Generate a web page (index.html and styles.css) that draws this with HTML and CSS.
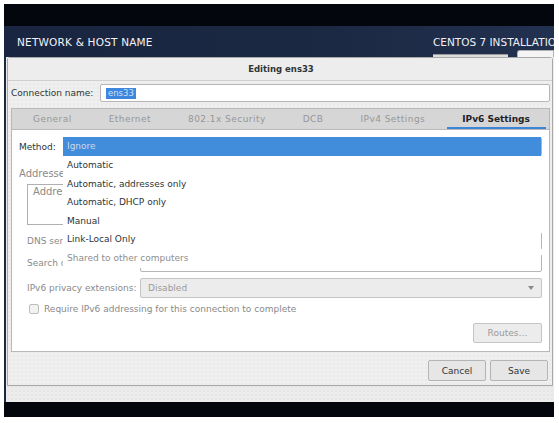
FILE: index.html
```html
<!DOCTYPE html>
<html>
<head>
<meta charset="utf-8">
<link rel="stylesheet" href="styles.css">
</head>
<body>
<div class="screen">
  <div class="topbar"></div>
  <div class="window">
    <header class="hdr">
      <div class="hdr-left">
        <div class="hdr-title">NETWORK &amp; HOST NAME</div>
        <div class="done-btn"></div>
      </div>
      <div class="hdr-right">
        <div class="product">CENTOS 7 INSTALLATION</div>
        <div class="hdr-btns"><span class="kb"></span><span class="help"></span></div>
      </div>
    </header>
    <div class="main">
      <div class="dialog">
        <div class="dlg-title">Editing ens33</div>
        <div class="dlg-body">
          <div class="conn-row">
            <span class="conn-lbl">Connection name:</span>
            <div class="entry conn-entry"><span class="sel">ens33</span></div>
          </div>
          <div class="notebook">
            <div class="tabs">
              <span class="tab">General</span>
              <span class="tab">Ethernet</span>
              <span class="tab">802.1x Security</span>
              <span class="tab">DCB</span>
              <span class="tab">IPv4 Settings</span>
              <span class="tab active">IPv6 Settings</span>
            </div>
            <div class="page">
              <div class="method-row">
                <span class="lbl dark">Method:</span>
                <div class="combo method-combo"></div>
              </div>
              <div class="addr-lbl"><span>Addresses</span></div>
              <div class="addr-table"><div class="th">Address</div></div>
              <div class="field-row dns-row">
                <span class="clip"><span class="lbl">DNS servers:</span></span>
                <div class="entry f-entry"></div>
              </div>
              <div class="field-row search-row">
                <span class="clip"><span class="lbl">Search domains:</span></span>
                <div class="entry f-entry"></div>
              </div>
              <div class="field-row priv-row">
                <span class="lbl f-lbl">IPv6 privacy extensions:</span>
                <div class="combo dis-combo"><span>Disabled</span><span class="arrow"></span></div>
              </div>
              <div class="check-row">
                <span class="checkbox"></span>
                <span class="lbl">Require IPv6 addressing for this connection to complete</span>
              </div>
              <div class="routes-row"><span class="btn routes-btn">Routes…</span></div>

              <div class="menu">
                <div class="item hl">Ignore</div>
                <div class="item">Automatic</div>
                <div class="item">Automatic, addresses only</div>
                <div class="item">Automatic, DHCP only</div>
                <div class="item">Manual</div>
                <div class="item">Link-Local Only</div>
                <div class="item insens">Shared to other computers</div>
              </div>
            </div>
          </div>
          <div class="dlg-btns">
            <span class="btn">Cancel</span>
            <span class="btn">Save</span>
          </div>
        </div>
      </div>
    </div>
  </div>
  <div class="botbar"></div>
</div>
</body>
</html>
```

FILE: styles.css
```css
* { box-sizing: border-box; }
html, body { margin: 0; padding: 0; background: #ffffff; }
body { font-family: "DejaVu Sans", sans-serif; font-size: 9px; color: #2e3436; }

.screen {
  margin: 4px 5px 0 4px;
  width: 550px;
  display: flex;
  flex-direction: column;
}
.topbar { height: 22px; background: #03060d; }
.botbar { height: 15px; background: #03060d; }

.window { background: #1b2842; display: flex; flex-direction: column; }

.hdr {
  height: 31px;
  display: flex;
  justify-content: space-between;
  background: linear-gradient(90deg, #1a2641 0%, #1b2842 55%, #223150 100%);
  overflow: hidden;
}
.hdr-left { padding-left: 13px; display: flex; flex-direction: column; }
.hdr-title {
  color: #f2f4f8;
  font-size: 10.5px;
  line-height: 12px;
  margin-top: 10px;
  letter-spacing: 0.2px;
}
.done-btn {
  margin-top: 12px;
  margin-left: 1px;
  width: 44px;
  height: 7px;
  background: #3b86d9;
  border-radius: 2px 2px 0 0;
}
.hdr-right { width: 121px; display: flex; flex-direction: column; overflow: hidden; }
.product {
  color: #eef0f4;
  font-size: 10.5px;
  line-height: 12px;
  margin-top: 10px;
  white-space: nowrap;
}
.hdr-btns { display: flex; align-items: flex-end; gap: 9px; flex: 1; }
.kb { width: 75px; height: 3px; background: #dcdcdc; border-top: 1px solid #9a9a9a; }
.help { flex: 1; height: 7px; background: #f4f4f4; border: 1px solid #b0b0b0; border-bottom: none; border-radius: 3px 0 0 0; }

.main {
  height: 345px;
  margin-left: 2px;
  background: #ececec;
  background-image: radial-gradient(#d6d6d6 0.5px, transparent 0.8px);
  background-size: 4px 4px;
  padding-left: 1px;
}

.dialog {
  width: 546px;
  height: 329px;
  border: 1px solid #a8a8a8;
  border-radius: 3px 3px 0 0;
  background: #efefef;
  background-image: radial-gradient(#dadada 0.5px, transparent 0.8px);
  background-size: 4px 4px;
  display: flex;
  flex-direction: column;
}
.dlg-title {
  height: 23px;
  line-height: 23px;
  text-align: center;
  font-weight: bold;
  font-size: 8.5px;
  color: #2e3436;
  border-bottom: 1px solid #cfcfcf;
  background: #ededed;
  padding-left: 2px;
}
.dlg-body { padding: 3px 2px 0 3px; flex: 1; display: flex; flex-direction: column; }

.conn-row { display: flex; align-items: center; height: 18px; }
.conn-lbl { width: 89px; color: #2e3436; }
.entry {
  background: #ffffff;
  border: 1px solid #b6b6b6;
  border-radius: 2px;
}
.conn-entry { flex: 1; height: 18px; display: flex; align-items: center; padding-left: 5px; }
.sel { background: #3d87de; color: #cfe0f5; padding: 0 2px; line-height: 11px; font-size: 8.5px; }

.notebook {
  margin-top: 6px;
  border: 1px solid #b9b9b9;
  display: flex;
  flex-direction: column;
}
.tabs {
  height: 21px;
  background: #d6d6d6;
  border-bottom: 1px solid #b9b9b9;
  display: flex;
  padding-left: 4px;
  gap: 3px;
  white-space: nowrap;
}
.tab {
  padding: 0 17px;
  line-height: 20px;
  color: #979797;
  letter-spacing: 0.45px;
  white-space: nowrap;
}
.tab.active {
  color: #1e2226;
  font-weight: bold;
  letter-spacing: 0;
  border-bottom: 2px solid #3b86d9;
  padding: 0 16px 0 15px;
  margin-left: 2px;
}

.page {
  position: relative;
  background: #ffffff;
  height: 221px;
  padding: 7px 7px 0 7px;
  display: flex;
  flex-direction: column;
}
.lbl { color: #8a8a8a; white-space: nowrap; }
.lbl.dark { color: #2e3436; }
.method-row { display: flex; align-items: center; height: 19px; }
.method-row .lbl { width: 44px; }
.combo { border: 1px solid #b6b6b6; border-radius: 2px; }
.method-combo { flex: 1; height: 19px; }

.addr-lbl {
  margin-top: 9px;
  line-height: 18px;
  color: #8a8a8a;
  font-size: 10px;
  width: 44px;
  overflow: hidden;
  white-space: nowrap;
}
.addr-table {
  margin: 1px 0 0 8px;
  width: 160px;
  height: 41px;
  border: 1px solid #b0b0b0;
}
.th {
  padding-left: 5px;
  line-height: 14px;
  color: #8a8a8a;
  font-size: 10px;
  width: 36px;
  overflow: hidden;
  white-space: nowrap;
}

.field-row { display: flex; align-items: center; padding-left: 8px; }
.clip { width: 36px; overflow: hidden; white-space: nowrap; margin-right: 77px; }
.f-lbl { width: 113px; }
.f-entry { flex: 1; height: 18px; }
.dns-row { margin-top: 7px; height: 18px; }
.search-row { margin-top: 4px; height: 18px; }
.priv-row { margin-top: 6px; height: 20px; }
.dis-combo {
  flex: 1;
  height: 20px;
  background: #ececec;
  border-color: #c4c4c4;
  color: #9a9a9a;
  display: flex;
  align-items: center;
  justify-content: space-between;
  padding: 0 7px 0 7px;
}
.arrow {
  width: 0; height: 0;
  border-left: 3px solid transparent;
  border-right: 3px solid transparent;
  border-top: 4px solid #8a8a8a;
}

.check-row { margin-top: 5px; height: 12px; display: flex; align-items: center; gap: 5px; padding-left: 10px; }
.checkbox {
  width: 10px; height: 10px;
  border: 1px solid #bdbdbd;
  border-radius: 2px;
  background: #f2f2f2;
}

.routes-row { margin-top: 8px; display: flex; justify-content: flex-end; }
.btn {
  display: inline-flex;
  align-items: center;
  justify-content: center;
  height: 20px;
  border: 1px solid #b4b4b4;
  border-radius: 2px;
  background: #e6e6e6;
  color: #2e3436;
}
.routes-btn { width: 69px; color: #9a9a9a; border-color: #c4c4c4; background: #ececec; }

.menu {
  position: absolute;
  left: 51px;
  top: 7px;
  width: 478px;
  background: #ffffff;
}
.item {
  height: 18.6px;
  line-height: 18.6px;
  padding-left: 4px;
  color: #2e3436;
}
.item.hl { background: #428cdc; color: #cdd9ea; height: 19px; }
.item.insens { color: #8e8e8e; }

.dlg-btns {
  margin-top: auto;
  padding: 0 2px 4px 0;
  display: flex;
  justify-content: flex-end;
  gap: 4px;
}
.dlg-btns .btn { width: 58px; height: 21px; }
```
